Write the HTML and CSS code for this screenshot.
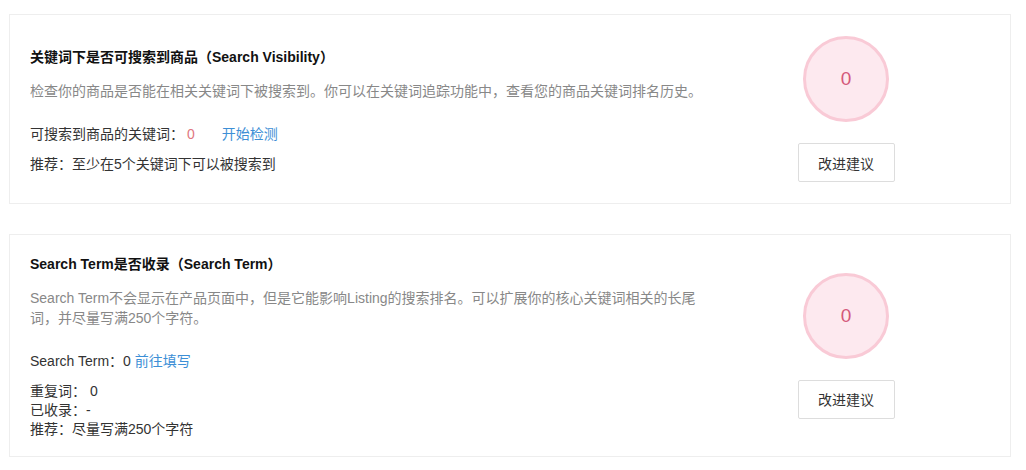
FILE: index.html
```html
<!DOCTYPE html>
<html>
<head>
  <meta charset="utf-8">
  <title>Listing 检测</title>
  <link rel="stylesheet" href="styles.css">
</head>
<body>
  <div class="card">
    <div class="info">
      <h3>关键词下是否可搜索到商品（Search Visibility）</h3>
      <p class="desc">检查你的商品是否能在相关关键词下被搜索到。你可以在关键词追踪功能中，查看您的商品关键词排名历史。</p>
      <div class="row">可搜索到商品的关键词：<span class="num">0</span><a class="link spaced" href="#">开始检测</a></div>
      <div class="row">推荐：至少在5个关键词下可以被搜索到</div>
    </div>
    <div class="score">
      <div class="circle">0</div>
      <button class="btn">改进建议</button>
    </div>
  </div>

  <div class="card">
    <div class="info">
      <h3>Search Term是否收录（Search Term）</h3>
      <p class="desc">Search Term不会显示在产品页面中，但是它能影响Listing的搜索排名。可以扩展你的核心关键词相关的长尾词，并尽量写满250个字符。</p>
      <div class="row">Search Term：0 <a class="link" href="#">前往填写</a></div>
      <div class="rows">
        <div>重复词： 0</div>
        <div>已收录：-</div>
        <div>推荐：尽量写满250个字符</div>
      </div>
    </div>
    <div class="score">
      <div class="circle">0</div>
      <button class="btn">改进建议</button>
    </div>
  </div>
</body>
</html>
```

FILE: styles.css
```css
body {
  margin: 14px 15px 0 9px;
  background-color: #ffffff;
  color: #333333;
  font-family: "Liberation Sans", "Noto Sans CJK SC", sans-serif;
  font-size: 14px;
}

.card {
  display: flex;
  align-items: center;
  border: 1px solid #eeeeee;
  padding: 20px 20px 17px;
  margin-bottom: 30px;
}

.info {
  width: 70%;
}

h3 {
  margin: 0 0 15px;
  font-size: 14px;
  line-height: 18px;
  font-weight: bold;
  color: #111111;
}

.desc {
  margin: 0 0 23px;
  line-height: 20px;
  color: #888888;
}

.row {
  line-height: 20px;
  margin-bottom: 10px;
}

.row:last-child {
  margin-bottom: 0;
}

.rows {
  line-height: 19px;
  margin-top: 11px;
}

.num {
  color: #e0787f;
  margin-left: 3px;
}

.link {
  color: #3d8fd6;
  text-decoration: none;
}

.spaced {
  margin-left: 27px;
}

.score {
  width: 30%;
  padding: 1px 0 4px;
  display: flex;
  flex-direction: column;
  align-items: center;
}

.circle {
  width: 80px;
  height: 80px;
  border: 3px solid #f9cad6;
  border-radius: 50%;
  background-color: #fde9ef;
  color: #d4587a;
  font-size: 19px;
  display: flex;
  align-items: center;
  justify-content: center;
  margin-bottom: 21px;
}

.btn {
  width: 97px;
  height: 39px;
  border: 1px solid #dddddd;
  border-radius: 2px;
  background-color: #ffffff;
  color: #333333;
  font-family: "Liberation Sans", "Noto Sans CJK SC", sans-serif;
  font-size: 14px;
}
```
